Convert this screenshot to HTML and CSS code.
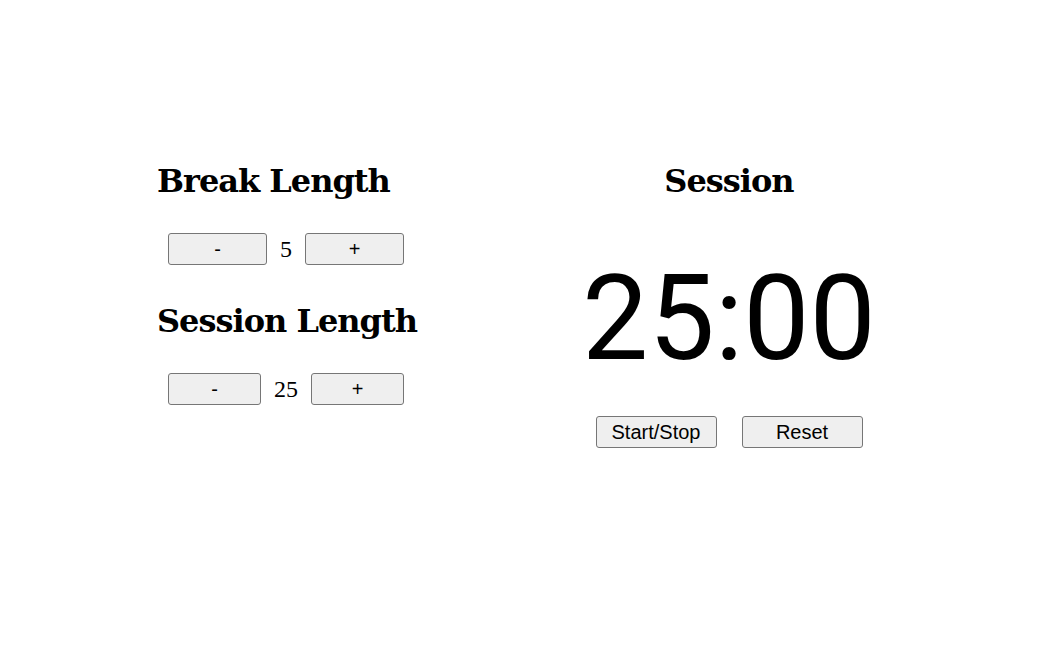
FILE: index.html
```html
<!DOCTYPE html>
<html>
<head>
<meta charset="utf-8">
<link rel="stylesheet" href="styles.css">
</head>
<body>
<main class="app">
  <section class="settings">
    <h2 class="label">Break Length</h2>
    <div class="control">
      <button class="btn">-</button>
      <span class="value">5</span>
      <button class="btn">+</button>
    </div>
    <h2 class="label">Session Length</h2>
    <div class="control">
      <button class="btn">-</button>
      <span class="value">25</span>
      <button class="btn">+</button>
    </div>
  </section>
  <section class="timer">
    <h2 class="label">Session</h2>
    <div class="time">25:00</div>
    <div class="actions">
      <button class="btn action">Start/Stop</button>
      <button class="btn action">Reset</button>
    </div>
  </section>
</main>
</body>
</html>
```
FILE: styles.css
```css
html, body {
  margin: 0;
  padding: 0;
  background: #fff;
  color: #000;
}
.app {
  display: flex;
  align-items: flex-start;
  padding: 160px 0 0 157px;
}
.settings {
  display: flex;
  flex-direction: column;
  align-items: stretch;
  width: 259px;
}
.label {
  font-family: "DejaVu Serif", serif;
  font-weight: bold;
  font-size: 32px;
  letter-spacing: -1px;
  line-height: 42px;
  margin: 0;
  white-space: nowrap;
}
.control {
  display: flex;
  align-items: center;
  margin: 31px 12px 35px 11px;
}
.control:last-child {
  margin-bottom: 0;
}
.btn {
  font-family: "Liberation Sans", Arial, sans-serif;
  font-size: 20px;
  background: #efefef;
  border: 1px solid #767676;
  border-radius: 3px;
  height: 32px;
  padding: 0;
  color: #000;
}
.control .btn {
  flex: 1;
}
.value {
  font-family: "Liberation Serif", serif;
  font-size: 24px;
  margin: 0 13px;
}
.timer {
  display: flex;
  flex-direction: column;
  align-items: center;
  margin-left: 170px;
  width: 286px;
}
.time {
  font-family: Roboto, sans-serif;
  font-size: 118px;
  line-height: 118px;
  margin-top: 58px;
}
.actions {
  display: flex;
  gap: 25px;
  margin-top: 38px;
}
.action {
  width: 121px;
}
```
